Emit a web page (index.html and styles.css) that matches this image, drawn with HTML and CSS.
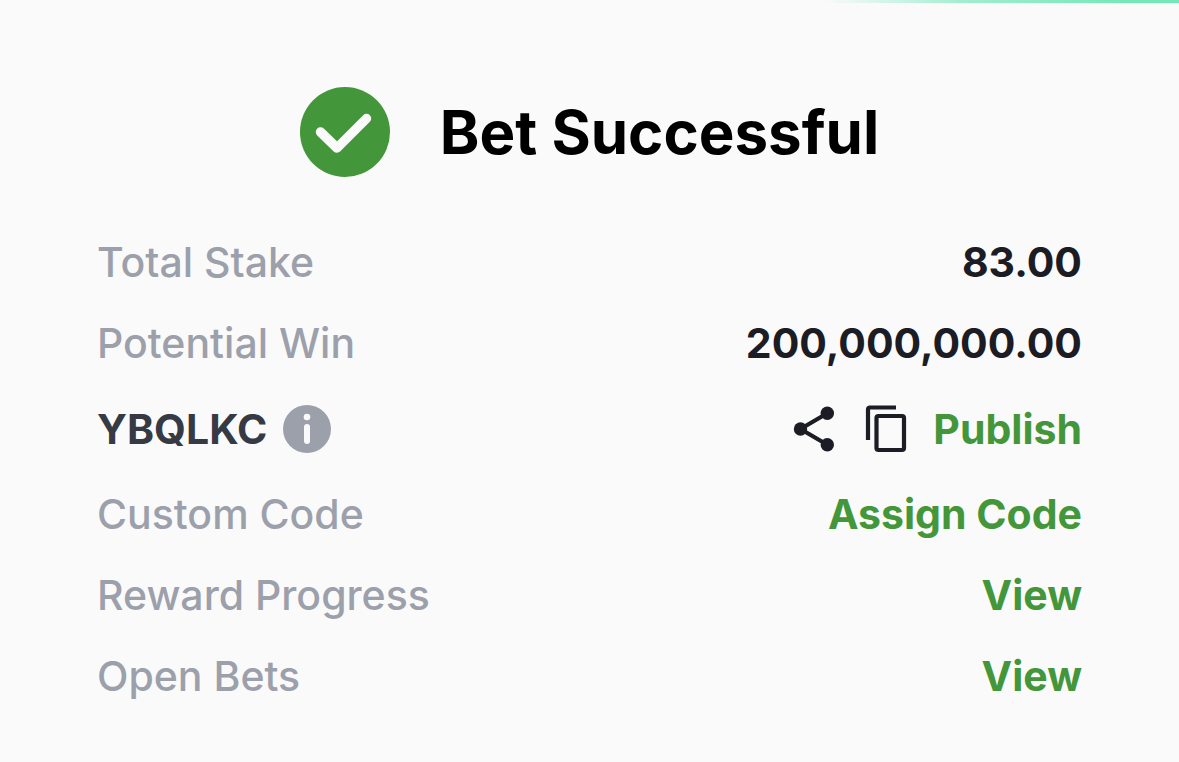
FILE: index.html
```html
<!DOCTYPE html>
<html lang="en">
<head>
<meta charset="utf-8">
<meta name="viewport" content="width=device-width, initial-scale=1">
<title>Bet Successful</title>
<link rel="stylesheet" href="styles.css">
</head>
<body>
<div class="progress-line"></div>
<main class="receipt">
  <header class="receipt-header">
    <svg class="check-icon" viewBox="0 0 90 90" aria-hidden="true"><circle cx="45" cy="45" r="45" fill="#439639"/><path d="M20.5 45 37 61 66.500 31.500" fill="none" stroke="#fafafa" stroke-width="9.500" stroke-linecap="round" stroke-linejoin="round"/></svg>
    <h1 class="title">Bet Successful</h1>
  </header>
  <dl class="details">
    <div class="row"><dt class="label">Total Stake</dt><dd class="value">83.00</dd></div>
    <div class="row"><dt class="label">Potential Win</dt><dd class="value">200,000,000.00</dd></div>
    <div class="row row-code">
      <dt class="code">YBQLKC
        <button class="icon-button" type="button" aria-label="Booking code information"><svg class="info-icon" viewBox="0 0 48 48"><circle cx="24" cy="24" r="24" fill="#9ca0ab"/><circle cx="24" cy="12" r="3.300" fill="#fafafa"/><path d="M24 22V36" fill="none" stroke="#fafafa" stroke-width="6" stroke-linecap="round"/></svg></button>
      </dt>
      <dd class="actions">
        <button class="icon-button" type="button" aria-label="Share"><svg class="share-icon" viewBox="0 0 42 46"><path d="M34.300 7.300 7.500 23 34.300 38.700" fill="none" stroke="#1b1c24" stroke-width="4.200"/><circle cx="34.300" cy="7.300" r="6.700" fill="#1b1c24"/><circle cx="7.500" cy="23" r="6.700" fill="#1b1c24"/><circle cx="34.300" cy="38.700" r="6.700" fill="#1b1c24"/></svg></button>
        <button class="icon-button" type="button" aria-label="Copy code"><svg class="copy-icon" viewBox="0 0 42 48"><path d="M3 35V4.500Q3 2.500 5 2.500H31" fill="none" stroke="#1b1c24" stroke-width="4.200"/><rect x="11.500" y="11" width="27.500" height="34" rx="2" fill="none" stroke="#1b1c24" stroke-width="4.200"/></svg></button>
        <button class="action" type="button">Publish</button>
      </dd>
    </div>
    <div class="row"><dt class="label">Custom Code</dt><dd class="value"><button class="action" type="button">Assign Code</button></dd></div>
    <div class="row"><dt class="label">Reward Progress</dt><dd class="value"><a class="action" href="#rewards">View</a></dd></div>
    <div class="row"><dt class="label">Open Bets</dt><dd class="value"><a class="action" href="#bets">View</a></dd></div>
  </dl>
</main>
</body>
</html>
```
FILE: styles.css
```css
* { box-sizing: border-box; }
body { margin: 0; background: #fafafa; font-family: Inter, "Liberation Sans", sans-serif; color: #1b1c24; }
.progress-line { height: 3px; margin-left: 70%; background: linear-gradient(to right, #fafafa, #a0edcf 40%, #75e8b7 85%); }
.receipt { padding: 84px 97px 40px; }
.receipt-header { display: flex; align-items: center; justify-content: center; gap: 50px; margin-bottom: 45px; }
.check-icon { width: 90px; height: 90px; }
.title { margin: 0; font-size: 60px; line-height: 90px; font-weight: 700; color: #000; }
.details { margin: 0; font-size: 41px; line-height: 81px; }
.row { display: flex; align-items: center; justify-content: space-between; }
.row-code { height: 90px; }
.label { color: #9ca0ab; font-weight: 500; }
.value { margin: 0; font-weight: 700; }
.code { display: flex; align-items: center; gap: 16px; font-weight: 700; color: #353a45; }
.actions { display: flex; align-items: center; margin: 0; }
.icon-button, .action { margin: 0; padding: 0; border: 0; background: none; color: #439639; font: inherit; font-weight: 700; text-decoration: none; cursor: pointer; }
.icon-button { display: flex; }
.info-icon { width: 48px; height: 48px; }
.share-icon { width: 42px; height: 46px; margin-right: 30px; }
.copy-icon { width: 42px; height: 48px; margin-right: 26px; }
```
